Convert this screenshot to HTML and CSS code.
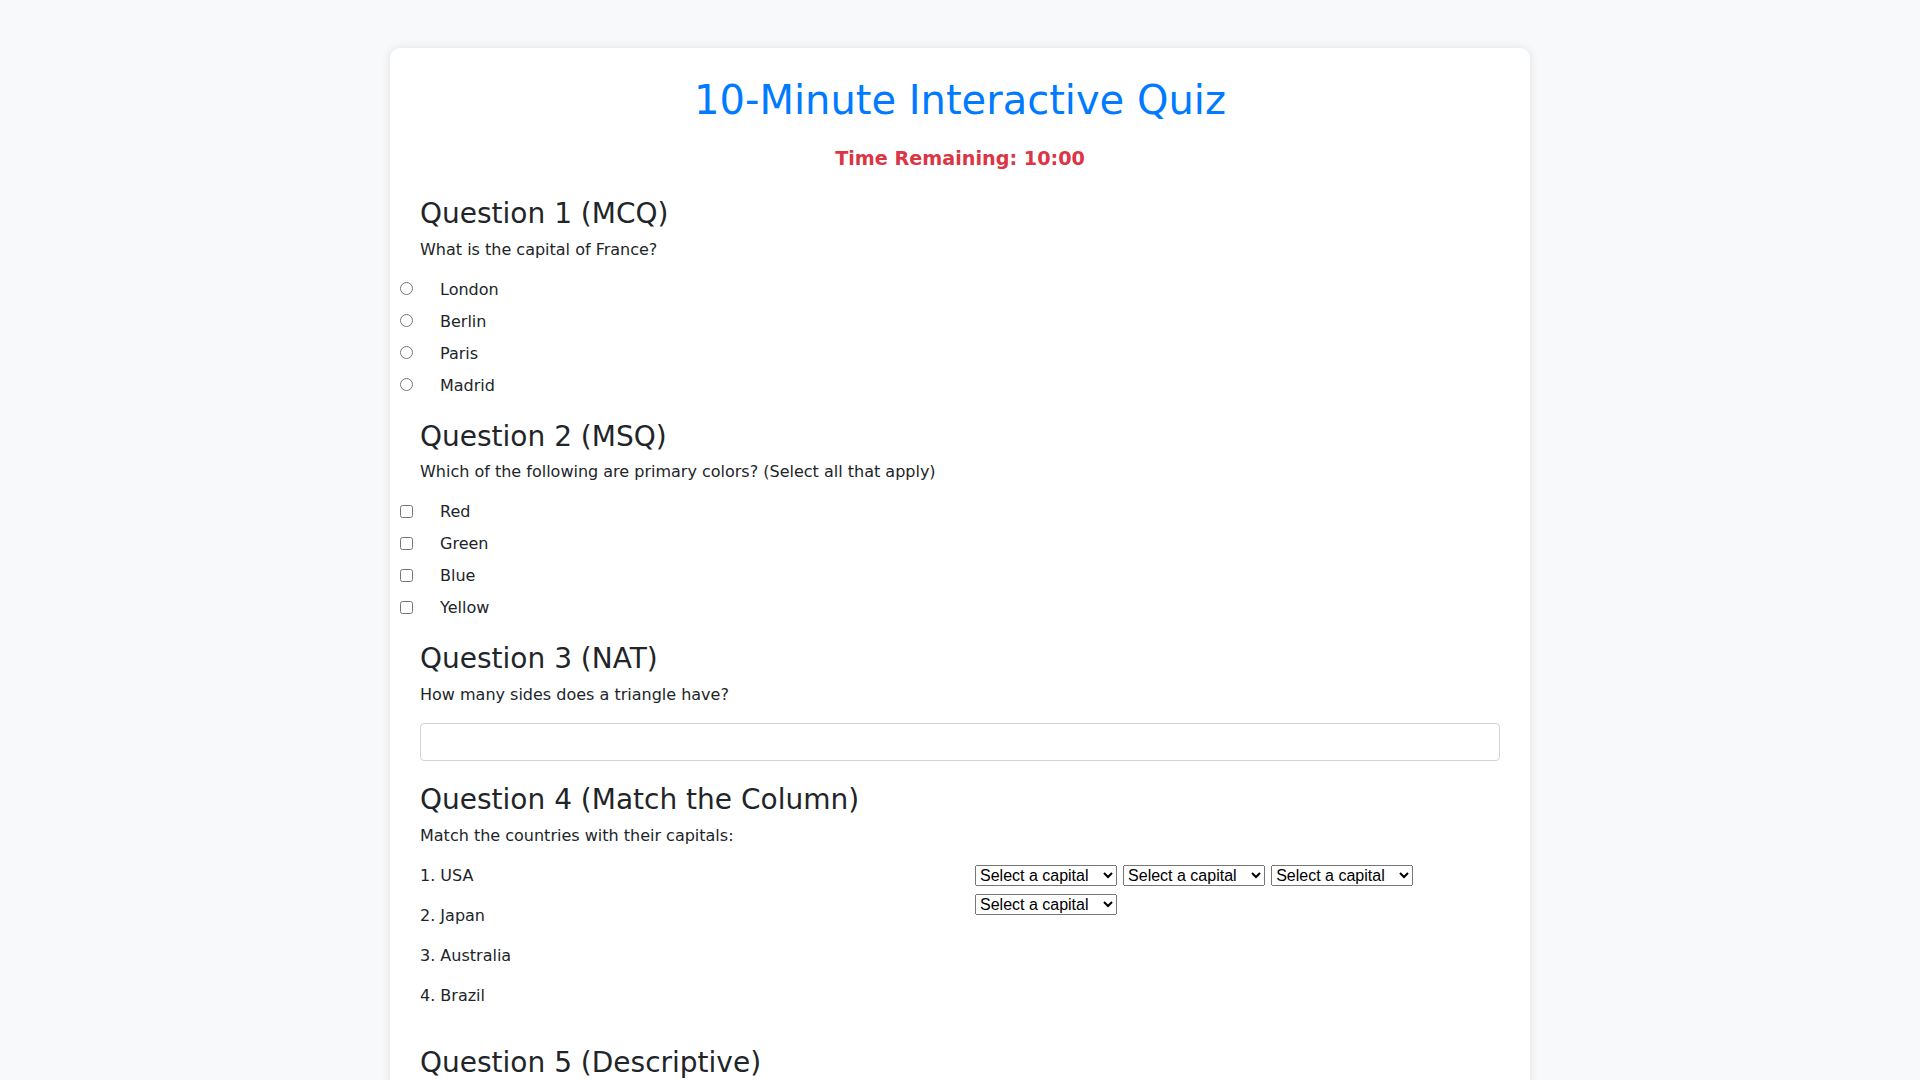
FILE: index.html
```html
<!DOCTYPE html>
<html lang="en">
<head>
<meta charset="utf-8">
<title>10-Minute Interactive Quiz</title>
<link rel="stylesheet" href="styles.css">
</head>
<body>
<div class="quiz">
  <h1 class="quiz-title">10-Minute Interactive Quiz</h1>
  <div class="timer">Time Remaining: 10:00</div>

  <div class="question">
    <h3 class="q-title">Question 1 (MCQ)</h3>
    <p class="q-text">What is the capital of France?</p>
    <div class="option"><input type="radio" name="q1" id="q1a"><label for="q1a">London</label></div>
    <div class="option"><input type="radio" name="q1" id="q1b"><label for="q1b">Berlin</label></div>
    <div class="option"><input type="radio" name="q1" id="q1c"><label for="q1c">Paris</label></div>
    <div class="option"><input type="radio" name="q1" id="q1d"><label for="q1d">Madrid</label></div>
  </div>

  <div class="question">
    <h3 class="q-title">Question 2 (MSQ)</h3>
    <p class="q-text">Which of the following are primary colors? (Select all that apply)</p>
    <div class="option"><input type="checkbox" id="q2a"><label for="q2a">Red</label></div>
    <div class="option"><input type="checkbox" id="q2b"><label for="q2b">Green</label></div>
    <div class="option"><input type="checkbox" id="q2c"><label for="q2c">Blue</label></div>
    <div class="option"><input type="checkbox" id="q2d"><label for="q2d">Yellow</label></div>
  </div>

  <div class="question">
    <h3 class="q-title">Question 3 (NAT)</h3>
    <p class="q-text">How many sides does a triangle have?</p>
    <input type="number" class="text-input">
  </div>

  <div class="question">
    <h3 class="q-title">Question 4 (Match the Column)</h3>
    <p class="q-text">Match the countries with their capitals:</p>
    <div class="match-row">
      <div class="match-col">
        <p class="q-text">1. USA</p>
        <p class="q-text">2. Japan</p>
        <p class="q-text">3. Australia</p>
        <p class="q-text">4. Brazil</p>
      </div>
      <div class="match-col">
        <select class="capital"><option>Select a capital</option><option>Washington D.C.</option><option>Tokyo</option><option>Canberra</option><option>Brasília</option></select>
        <select class="capital"><option>Select a capital</option><option>Washington D.C.</option><option>Tokyo</option><option>Canberra</option><option>Brasília</option></select>
        <select class="capital"><option>Select a capital</option><option>Washington D.C.</option><option>Tokyo</option><option>Canberra</option><option>Brasília</option></select>
        <select class="capital"><option>Select a capital</option><option>Washington D.C.</option><option>Tokyo</option><option>Canberra</option><option>Brasília</option></select>
      </div>
    </div>
  </div>

  <div class="question">
    <h3 class="q-title">Question 5 (Descriptive)</h3>
    <p class="q-text">Explain the water cycle in a few sentences.</p>
    <textarea class="text-area" rows="4"></textarea>
  </div>
</div>
</body>
</html>
```

FILE: styles.css
```css
html, body {
  margin: 0;
  padding: 0;
}

body {
  background: #f8f9fa;
  font-family: "DejaVu Sans", "Noto Sans", sans-serif;
  font-size: 16px;
  line-height: 1.5;
  color: #212529;
}

.quiz {
  width: 1140px;
  box-sizing: border-box;
  margin: 48px auto 0;
  padding: 28px 30px 30px;
  background: #ffffff;
  border-radius: 10px;
  box-shadow: 0 0 10px rgba(0, 0, 0, 0.1);
}

.quiz-title {
  margin: 0 0 21px;
  font-size: 40px;
  font-weight: 400;
  line-height: 1.2;
  text-align: center;
  color: #007bff;
}

.timer {
  margin-bottom: 25px;
  font-size: 19.2px;
  font-weight: 700;
  line-height: 1.5;
  text-align: center;
  color: #dc3545;
}

.question {
  margin-bottom: 24px;
}

.q-title {
  margin: 0 0 8px;
  font-size: 28px;
  font-weight: 400;
  line-height: 1.1;
}

.q-text {
  margin: 0 0 16px;
}

.option {
  display: flex;
  align-items: center;
  height: 24px;
  margin: 0 0 8px -20px;
}

.option input {
  width: 13px;
  height: 13px;
  margin: -2px 27px 0 0;
}

.text-input,
.text-area {
  display: block;
  width: 100%;
  box-sizing: border-box;
  height: 38px;
  margin: 0;
  padding: 6px 12px;
  font: inherit;
  color: #495057;
  background: #fff;
  border: 1px solid #ced4da;
  border-radius: 4px;
}

.text-area {
  height: auto;
}

.match-row {
  display: grid;
  grid-template-columns: 1fr 1fr;
  column-gap: 30px;
}

.capital {
  width: 142px;
  font-family: "Liberation Sans", Arial, sans-serif;
  font-size: 16px;
  margin: 0 1px 7px 0;
}
```
